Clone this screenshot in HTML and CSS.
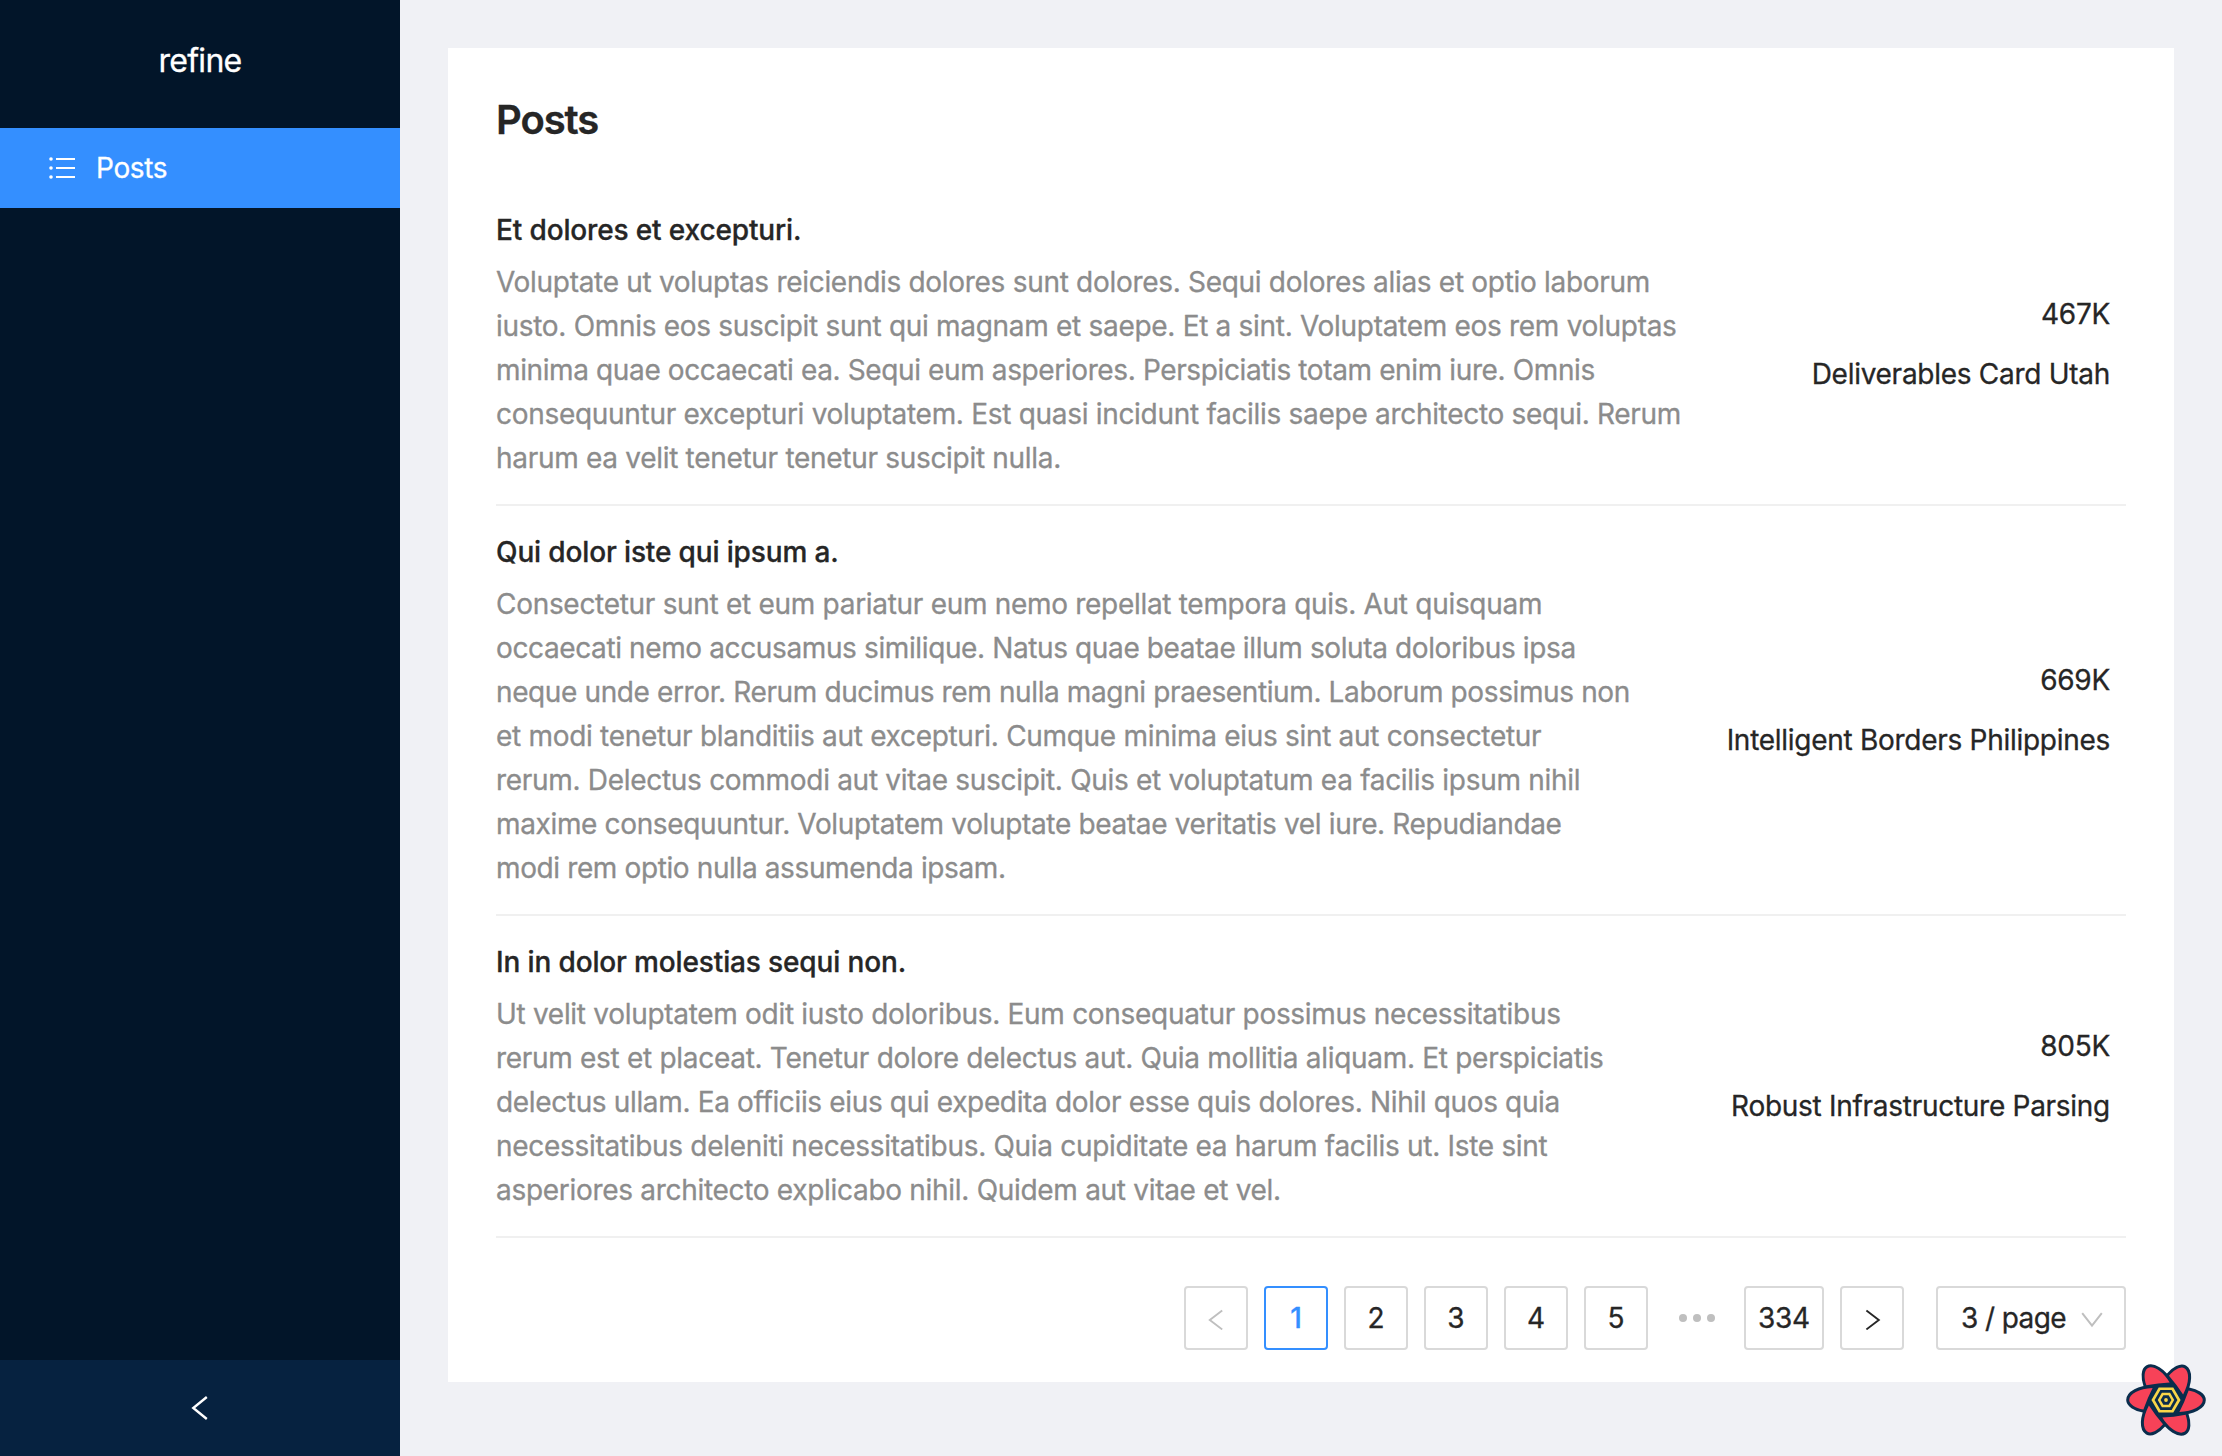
FILE: index.html
```html
<!DOCTYPE html>
<html lang="en">
<head>
<meta charset="utf-8">
<title>Posts</title>
<link rel="stylesheet" href="styles.css">
</head>
<body>
<div class="layout">
  <aside class="sider">
    <div class="brand">refine</div>
    <nav class="menu">
      <a class="menu-item">
        <svg class="menu-icon" width="28" height="28" viewBox="0 0 28 28" fill="none" stroke="currentColor" stroke-width="2"><path d="M8 5h19M8 14h19M8 23h19"/><g fill="currentColor" stroke="none"><circle cx="3" cy="5" r="1.8"/><circle cx="3" cy="14" r="1.8"/><circle cx="3" cy="23" r="1.8"/></g></svg>
        <span>Posts</span>
      </a>
    </nav>
    <div class="collapse">
      <svg width="28" height="28" viewBox="0 0 28 28" fill="none" stroke="currentColor" stroke-width="2.4"><path d="M20.8 3L7.3 14l13.5 11"/></svg>
    </div>
  </aside>
  <main class="content">
    <section class="card">
      <h1 class="heading">Posts</h1>
      <ul class="posts">
        <li class="post">
          <div>
            <h2 class="post-title">Et dolores et excepturi.</h2>
            <p class="post-text">Voluptate ut voluptas reiciendis dolores sunt dolores. Sequi dolores alias et optio laborum<br>iusto. Omnis eos suscipit sunt qui magnam et saepe. Et a sint. Voluptatem eos rem voluptas<br><span class="tight">minima quae occaecati ea. Sequi eum asperiores. Perspiciatis totam enim iure. Omnis</span><br>consequuntur excepturi voluptatem. Est quasi incidunt facilis saepe architecto sequi. Rerum<br>harum ea velit tenetur tenetur suscipit nulla.</p>
          </div>
          <div class="post-meta"><span>467K</span><span>Deliverables Card Utah</span></div>
        </li>
        <li class="post">
          <div>
            <h2 class="post-title">Qui dolor iste qui ipsum a.</h2>
            <p class="post-text">Consectetur sunt et eum pariatur eum nemo repellat tempora quis. Aut quisquam<br><span class="tight">occaecati nemo accusamus similique. Natus quae beatae illum soluta doloribus ipsa</span><br><span class="tight">neque unde error. Rerum ducimus rem nulla magni praesentium. Laborum possimus non</span><br>et modi tenetur blanditiis aut excepturi. Cumque minima eius sint aut consectetur<br>rerum. Delectus commodi aut vitae suscipit. Quis et voluptatum ea facilis ipsum nihil<br><span class="snug">maxime consequuntur. Voluptatem voluptate beatae veritatis vel iure. Repudiandae</span><br><span class="tight">modi rem optio nulla assumenda ipsam.</span></p>
          </div>
          <div class="post-meta"><span>669K</span><span>Intelligent Borders Philippines</span></div>
        </li>
        <li class="post">
          <div>
            <h2 class="post-title">In in dolor molestias sequi non.</h2>
            <p class="post-text">Ut velit voluptatem odit iusto doloribus. Eum consequatur possimus necessitatibus<br>rerum est et placeat. Tenetur dolore delectus aut. Quia mollitia aliquam. Et perspiciatis<br><span class="snug">delectus ullam. Ea officiis eius qui expedita dolor esse quis dolores. Nihil quos quia</span><br>necessitatibus deleniti necessitatibus. Quia cupiditate ea harum facilis ut. Iste sint<br>asperiores architecto explicabo nihil. Quidem aut vitae et vel.</p>
          </div>
          <div class="post-meta"><span>805K</span><span>Robust Infrastructure Parsing</span></div>
        </li>
      </ul>
      <div class="pagination">
        <span class="page disabled"><svg width="24" height="24" viewBox="0 0 24 24" fill="none" stroke="currentColor" stroke-width="1.9"><path d="M18.2 4.6L5.8 14l12.4 9.4"/></svg></span>
        <span class="page active">1</span>
        <span class="page">2</span>
        <span class="page">3</span>
        <span class="page">4</span>
        <span class="page">5</span>
        <span class="dots"><i></i><i></i><i></i></span>
        <span class="page wide">334</span>
        <span class="page"><svg width="24" height="24" viewBox="0 0 24 24" fill="none" stroke="currentColor" stroke-width="1.9"><path d="M6.4 4.6L18.8 14 6.4 23.4"/></svg></span>
        <span class="size"><span>3 / page</span><svg width="24" height="24" viewBox="0 0 24 24" fill="none" stroke="#bfbfbf" stroke-width="2"><path d="M2.2 7.2L12 19.6l9.8-12.4"/></svg></span>
      </div>
    </section>
  </main>
  <svg class="query-badge" width="80" height="80" viewBox="-40 -40 80 80">
    <defs>
      <path id="petal" d="M22.6 -9.6C31 -8 36.8 -4 36.8 0C36.8 6 27 11.6 13.4 12Q18.6 2 22.6 -9.6Z"/>
      <g id="flower">
        <use href="#petal"/><use href="#petal" transform="rotate(60)"/><use href="#petal" transform="rotate(120)"/><use href="#petal" transform="rotate(180)"/><use href="#petal" transform="rotate(240)"/><use href="#petal" transform="rotate(300)"/>
      </g>
    </defs>
    <use href="#flower" fill="#0a2d4c" stroke="#0a2d4c" stroke-width="6" stroke-linejoin="round"/>
    <circle r="18" fill="#0a2d4c"/>
    <use href="#flower" fill="#f74258"/>
    <g fill="none" stroke="#f8d649"><path stroke-width="2.7" d="M13 0L6.5 11.26H-6.5L-13 0L-6.5 -11.26H6.5Z"/><path stroke-width="2.5" d="M6.8 0L3.4 5.9H-3.4L-6.8 0L-3.4 -5.9H3.4Z"/></g>
    <circle r="1.9" fill="#f8d649"/>
  </svg>
</div>
</body>
</html>
```
FILE: styles.css
```css
* { box-sizing: border-box; }
body {
  margin: 0;
  font-family: Inter, "Liberation Sans", sans-serif;
  font-size: 28px;
  line-height: 44px;
  color: #262626;
  background: #f0f1f5;
  -webkit-text-stroke: 0.3px currentColor;
}
svg { display: block; flex: none; }
.layout { display: flex; height: 1456px; position: relative; overflow: hidden; }
.sider {
  display: flex;
  flex-direction: column;
  width: 400px;
  flex: none;
  background: #021529;
  color: #fff;
}
.brand {
  height: 128px;
  padding-bottom: 6px;
  display: flex;
  align-items: center;
  justify-content: center;
  font-size: 32px;
  letter-spacing: -0.7px;
}
.menu { flex: 1; }
.menu-item {
  display: flex;
  align-items: center;
  gap: 20px;
  height: 80px;
  padding-left: 48px;
  background: #348fff;
  letter-spacing: -0.35px;
}
.collapse {
  height: 96px;
  display: flex;
  align-items: center;
  justify-content: center;
  background: #062240;
}
.content { flex: 1; padding: 48px; }
.card { background: #fff; padding: 40px 48px 32px; }
.heading {
  margin: 0 0 32px;
  font-size: 40px;
  line-height: 64px;
  font-weight: 600;
  letter-spacing: -1.1px;
}
.posts { list-style: none; margin: 0; padding: 0; }
.post {
  display: flex;
  justify-content: space-between;
  align-items: center;
  padding: 24px 0;
  border-bottom: 2px solid #f0f0f0;
  white-space: nowrap;
}
.post-title {
  margin: 0 0 8px;
  font-size: 28px;
  line-height: 44px;
  font-weight: 500;
  letter-spacing: -0.14px;
}
.post-text { margin: 0; color: #8c8c8c; letter-spacing: -0.3px; }
.tight { letter-spacing: -0.38px; }
.snug { letter-spacing: -0.35px; }
.post-meta {
  display: flex;
  flex-direction: column;
  align-items: flex-end;
  gap: 16px;
  padding-right: 16px;
  letter-spacing: -0.28px;
}
.pagination { display: flex; justify-content: flex-end; gap: 16px; margin-top: 48px; }
.page, .size {
  display: flex;
  align-items: center;
  justify-content: center;
  width: 64px;
  height: 64px;
  border: 2px solid #d9d9d9;
  border-radius: 4px;
}
.wide { width: 80px; letter-spacing: -0.3px; }
.active { color: #348fff; border-color: #348fff; font-weight: 500; }
.disabled { color: #bfbfbf; }
.dots { width: 64px; padding-left: 2px; display: flex; align-items: center; justify-content: center; gap: 6px; }
.dots i { width: 8px; height: 8px; border-radius: 50%; background: #bfbfbf; }
.size {
  width: 190px;
  margin-left: 16px;
  padding: 0 20px 0 23px;
  justify-content: space-between;
  letter-spacing: -0.6px;
}
.query-badge { position: absolute; left: 2126px; top: 1360px; }
```
